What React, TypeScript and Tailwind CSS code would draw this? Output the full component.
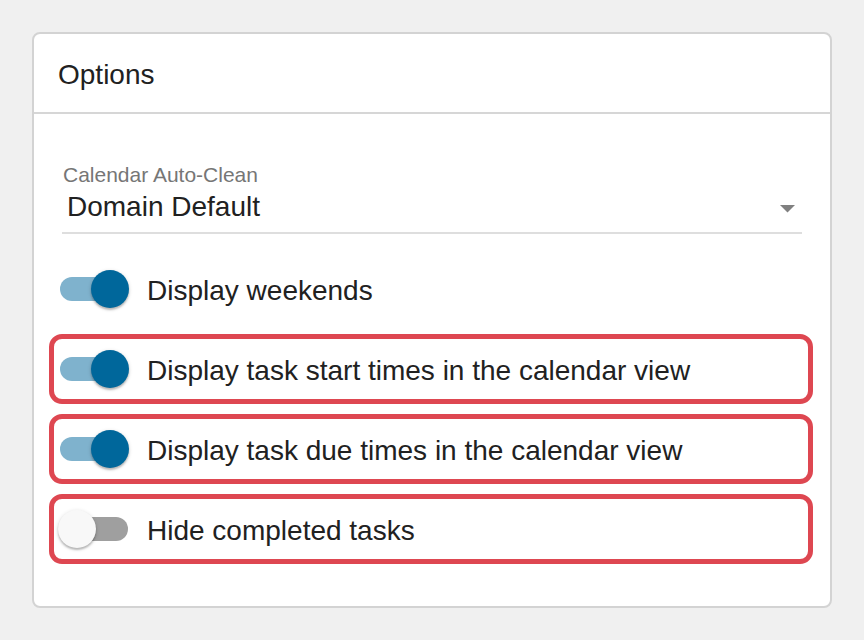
import React from "react";

type SwitchProps = { checked: boolean };

function Toggle({ checked }: SwitchProps) {
  return (
    <span className="relative block w-[72px] h-[40px] shrink-0">
      <span
        className={
          checked
            ? "absolute left-[3px] top-[8px] w-[68px] h-[24px] rounded-full bg-[#7fb2cd]"
            : "absolute left-[3px] top-[8px] w-[68px] h-[24px] rounded-full bg-[#9f9f9f]"
        }
      />
      <span
        className={
          checked
            ? "absolute left-[34px] top-[1px] w-[38px] h-[38px] rounded-full bg-[#00679b] shadow-[0_2px_2px_rgba(0,0,0,0.22),0_1px_4px_rgba(0,0,0,0.14)]"
            : "absolute left-[1px] top-[1px] w-[38px] h-[38px] rounded-full bg-[#f8f8f8] shadow-[0_2px_2px_rgba(0,0,0,0.22),0_1px_4px_rgba(0,0,0,0.14)]"
        }
      />
    </span>
  );
}

type RowProps = { label: string; checked: boolean; highlighted?: boolean };

function OptionRow({ label, checked, highlighted }: RowProps) {
  return (
    <div
      className={
        highlighted
          ? "ml-[-13px] mr-[-11px] h-[70px] flex items-center gap-[18px] pl-[3px] border-[5px] border-[#de4751] rounded-[13px]"
          : "ml-[-13px] mr-[-11px] h-[70px] flex items-center gap-[18px] pl-[3px] border-[5px] border-transparent rounded-[13px]"
      }
    >
      <Toggle checked={checked} />
      <span className="mt-[3px] text-[28px] leading-[32px] text-[#212121]">{label}</span>
    </div>
  );
}

export default function App() {
  return (
    <div
      className="w-[864px] h-[640px] bg-[#f0f0f0] pt-[32px] px-[32px]"
      style={{ fontFamily: '"Liberation Sans", Arial, sans-serif' }}
    >
      <div className="w-[800px] h-[576px] bg-white border-2 border-[#d3d3d3] rounded-[8px] flex flex-col">
        <div className="h-[80px] flex items-center pl-[24px] pt-[3px] border-b-2 border-[#d6d6d6] shrink-0">
          <span className="text-[28px] leading-[32px] text-[#212121]">Options</span>
        </div>
        <div className="pt-[49px] px-[28px]">
          <div className="flex flex-col">
            <span className="pl-[1px] text-[21px] leading-[24px] text-[#767676]">Calendar Auto-Clean</span>
            <div className="mt-[4px] flex items-center pb-[9px] border-b-2 border-[#dedede]">
              <span className="flex-1 pl-[5px] text-[28px] leading-[32px] text-[#212121]">
                Domain Default
              </span>
              <svg width="15" height="8" viewBox="0 0 15 8" className="mr-[7px] mt-[4px]">
                <path d="M0 0 L15 0 L7.5 7.5 Z" fill="#808080" />
              </svg>
            </div>
          </div>
          <div className="mt-[20px] flex flex-col gap-[10px]">
            <OptionRow label="Display weekends" checked />
            <OptionRow label="Display task start times in the calendar view" checked highlighted />
            <OptionRow label="Display task due times in the calendar view" checked highlighted />
            <OptionRow label="Hide completed tasks" checked={false} highlighted />
          </div>
        </div>
      </div>
    </div>
  );
}
